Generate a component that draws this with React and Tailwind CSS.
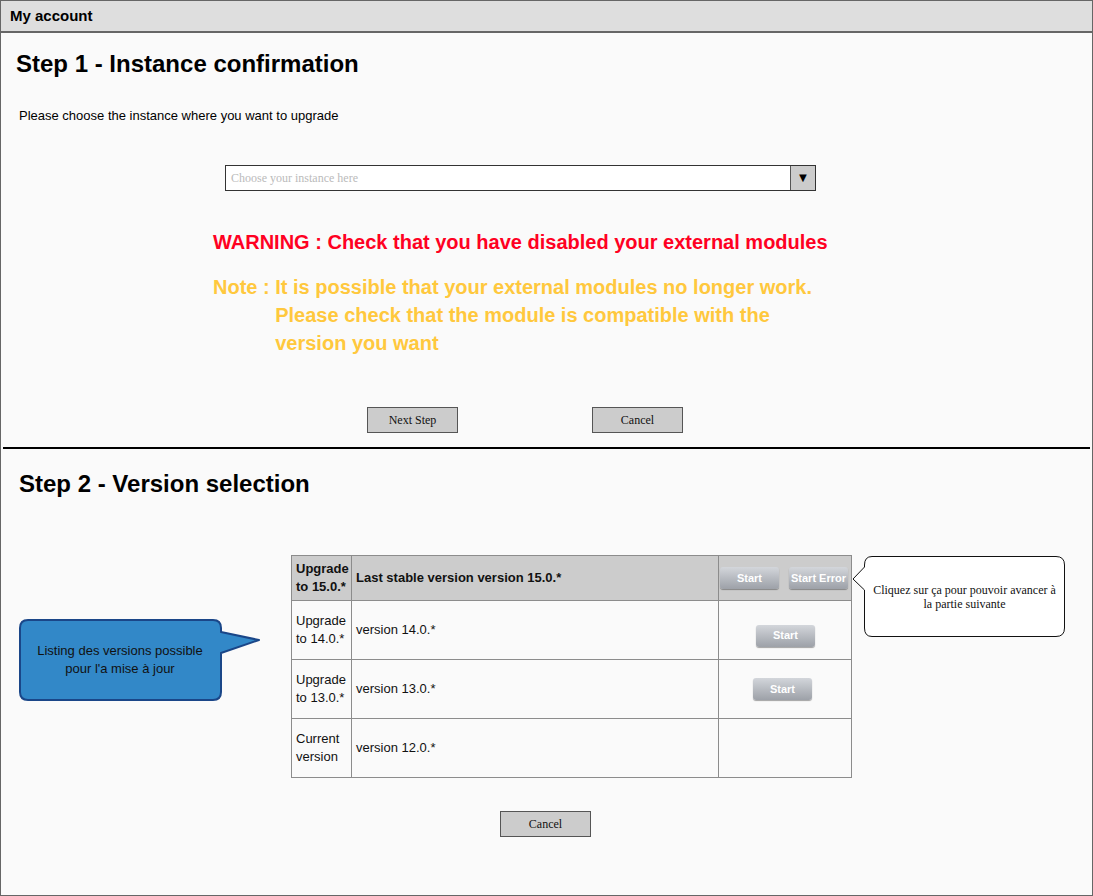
import React from "react";

const sans = { fontFamily: '"Liberation Sans", Arial, sans-serif' };
const serif = { fontFamily: '"Liberation Serif", "Times New Roman", serif' };

function GrayBtn({ children, className = "" }) {
  return (
    <div
      className={
        "h-[22px] w-[59px] rounded-[3px] bg-gradient-to-b from-[#d3d6db] to-[#9da1a8] shadow-[0_1px_1px_rgba(0,0,0,0.35)] flex items-center justify-center text-[11px] font-bold text-white whitespace-nowrap " +
        className
      }
    >
      {children}
    </div>
  );
}

function SerifBtn({ children }) {
  return (
    <div
      className="h-[26px] w-[91px] bg-[#cccccc] border border-[#555] flex items-center justify-center text-[12px] text-[#111]"
      style={serif}
    >
      {children}
    </div>
  );
}

export default function App() {
  return (
    <div
      className="w-[1093px] h-[896px] bg-[#fafafa] border border-[#666] overflow-hidden text-black"
      style={sans}
    >
      {/* header */}
      <div className="h-[32px] bg-[#dedede] border-b-2 border-[#666] flex items-center pl-[9px] text-[15px] font-bold">
        My account
      </div>

      {/* Step 1 */}
      <div className="mt-[15px] pl-[15px] h-[32px] leading-[32px] text-[24px] font-bold">
        Step 1 - Instance confirmation
      </div>
      <div className="mt-[28px] pl-[18px] h-[16px] leading-[16px] text-[13px]">
        Please choose the instance where you want to upgrade
      </div>

      <div className="mt-[41px] ml-[224px] w-[591px] h-[26px] flex border border-[#333] bg-white">
        <div
          className="flex-1 flex items-center pl-[5px] text-[12px] text-[#bbbbbb]"
          style={serif}
        >
          Choose your instance here
        </div>
        <div className="w-[25px] bg-[#cccccc] border-l border-[#555] flex items-center justify-center text-[13px] text-black">
          ▼
        </div>
      </div>

      <div className="mt-[37px] pl-[212px] h-[28px] leading-[28px] text-[20px] font-bold text-[#ff0022]">
        WARNING : Check that you have disabled your external modules
      </div>

      <div className="mt-[17px] pl-[212px] flex text-[20px] font-bold leading-[28px] text-[#ffc83d]">
        <span className="whitespace-pre">Note : </span>
        <div>
          It is possible that your external modules no longer work.
          <br />
          Please check that the module is compatible with the
          <br />
          version you want
        </div>
      </div>

      <div className="mt-[50px] pl-[366px] flex gap-[134px]">
        <SerifBtn>Next Step</SerifBtn>
        <SerifBtn>Cancel</SerifBtn>
      </div>

      <div className="mt-[14px] mx-[2px] h-[2px] bg-black" />

      {/* Step 2 */}
      <div className="mt-[19px] pl-[18px] h-[32px] leading-[32px] text-[24px] font-bold">
        Step 2 - Version selection
      </div>

      <div className="mt-[55px] pl-[18px] flex items-start">
        {/* left callout */}
        <div className="relative mt-[64px] w-[242px] h-[82px]">
          <svg
            className="absolute inset-0"
            width="242"
            height="82"
            viewBox="0 0 242 82"
          >
            <path
              d="M9 1 H194 Q202 1 202 9 V13 L240 21 L202 34 V73 Q202 81 194 81 H9 Q1 81 1 73 V9 Q1 1 9 1 Z"
              fill="#3288c8"
              stroke="#1a4688"
              strokeWidth="2"
              strokeLinejoin="round"
            />
          </svg>
          <div className="relative w-[202px] h-[82px] flex items-center justify-center text-center text-[13px] leading-[18px] text-[#111]">
            Listing des versions possible
            <br />
            pour l'a mise à jour
          </div>
        </div>

        {/* table */}
        <div className="ml-[30px] w-[561px] border border-[#8c8c8c] text-[13px] text-[#111]">
          <div className="flex h-[45px] bg-[#cccccc] font-bold border-b border-[#8c8c8c]">
            <div className="w-[60px] border-r border-[#8c8c8c] flex items-center pl-[4px] leading-[18px]">
              Upgrade to 15.0.*
            </div>
            <div className="w-[367px] border-r border-[#8c8c8c] flex items-center pl-[4px]">
              Last stable version version 15.0.*
            </div>
            <div className="flex-1 flex items-center pl-[1px] gap-[10px]">
              <GrayBtn>Start</GrayBtn>
              <GrayBtn>Start Error</GrayBtn>
            </div>
          </div>
          <div className="flex h-[59px] border-b border-[#8c8c8c]">
            <div className="w-[60px] border-r border-[#8c8c8c] flex items-center pl-[4px] leading-[18px]">
              Upgrade to 14.0.*
            </div>
            <div className="w-[367px] border-r border-[#8c8c8c] flex items-center pl-[4px]">
              version 14.0.*
            </div>
            <div className="flex-1 flex items-center pl-[37px] pt-[11px]">
              <GrayBtn>Start</GrayBtn>
            </div>
          </div>
          <div className="flex h-[59px] border-b border-[#8c8c8c]">
            <div className="w-[60px] border-r border-[#8c8c8c] flex items-center pl-[4px] leading-[18px]">
              Upgrade to 13.0.*
            </div>
            <div className="w-[367px] border-r border-[#8c8c8c] flex items-center pl-[4px]">
              version 13.0.*
            </div>
            <div className="flex-1 flex items-center pl-[34px]">
              <GrayBtn>Start</GrayBtn>
            </div>
          </div>
          <div className="flex h-[58px]">
            <div className="w-[60px] border-r border-[#8c8c8c] flex items-center pl-[4px] leading-[18px]">
              Current version
            </div>
            <div className="w-[367px] border-r border-[#8c8c8c] flex items-center pl-[4px]">
              version 12.0.*
            </div>
            <div className="flex-1" />
          </div>
        </div>

        {/* right callout */}
        <div className="relative mt-[0px] w-[214px] h-[83px]">
          <svg
            className="absolute inset-0"
            width="214"
            height="83"
            viewBox="0 0 214 83"
          >
            <path
              d="M20 1.5 H204 Q212.5 1.5 212.5 10 V73 Q212.5 81.5 204 81.5 H20 Q12.5 81.5 12.5 73 V35 L1 24 L12.5 12 V10 Q12.5 1.5 20 1.5 Z"
              fill="#ffffff"
              stroke="#111"
              strokeWidth="1"
              strokeLinejoin="round"
            />
          </svg>
          <div
            className="relative ml-[12px] w-[201px] h-[83px] flex items-center justify-center text-center text-[12px] leading-[14px] text-[#111]"
            style={serif}
          >
            Cliquez sur ça pour pouvoir avancer à
            <br />
            la partie suivante
          </div>
        </div>
      </div>

      <div className="mt-[33px] pl-[499px] flex">
        <SerifBtn>Cancel</SerifBtn>
      </div>
    </div>
  );
}
